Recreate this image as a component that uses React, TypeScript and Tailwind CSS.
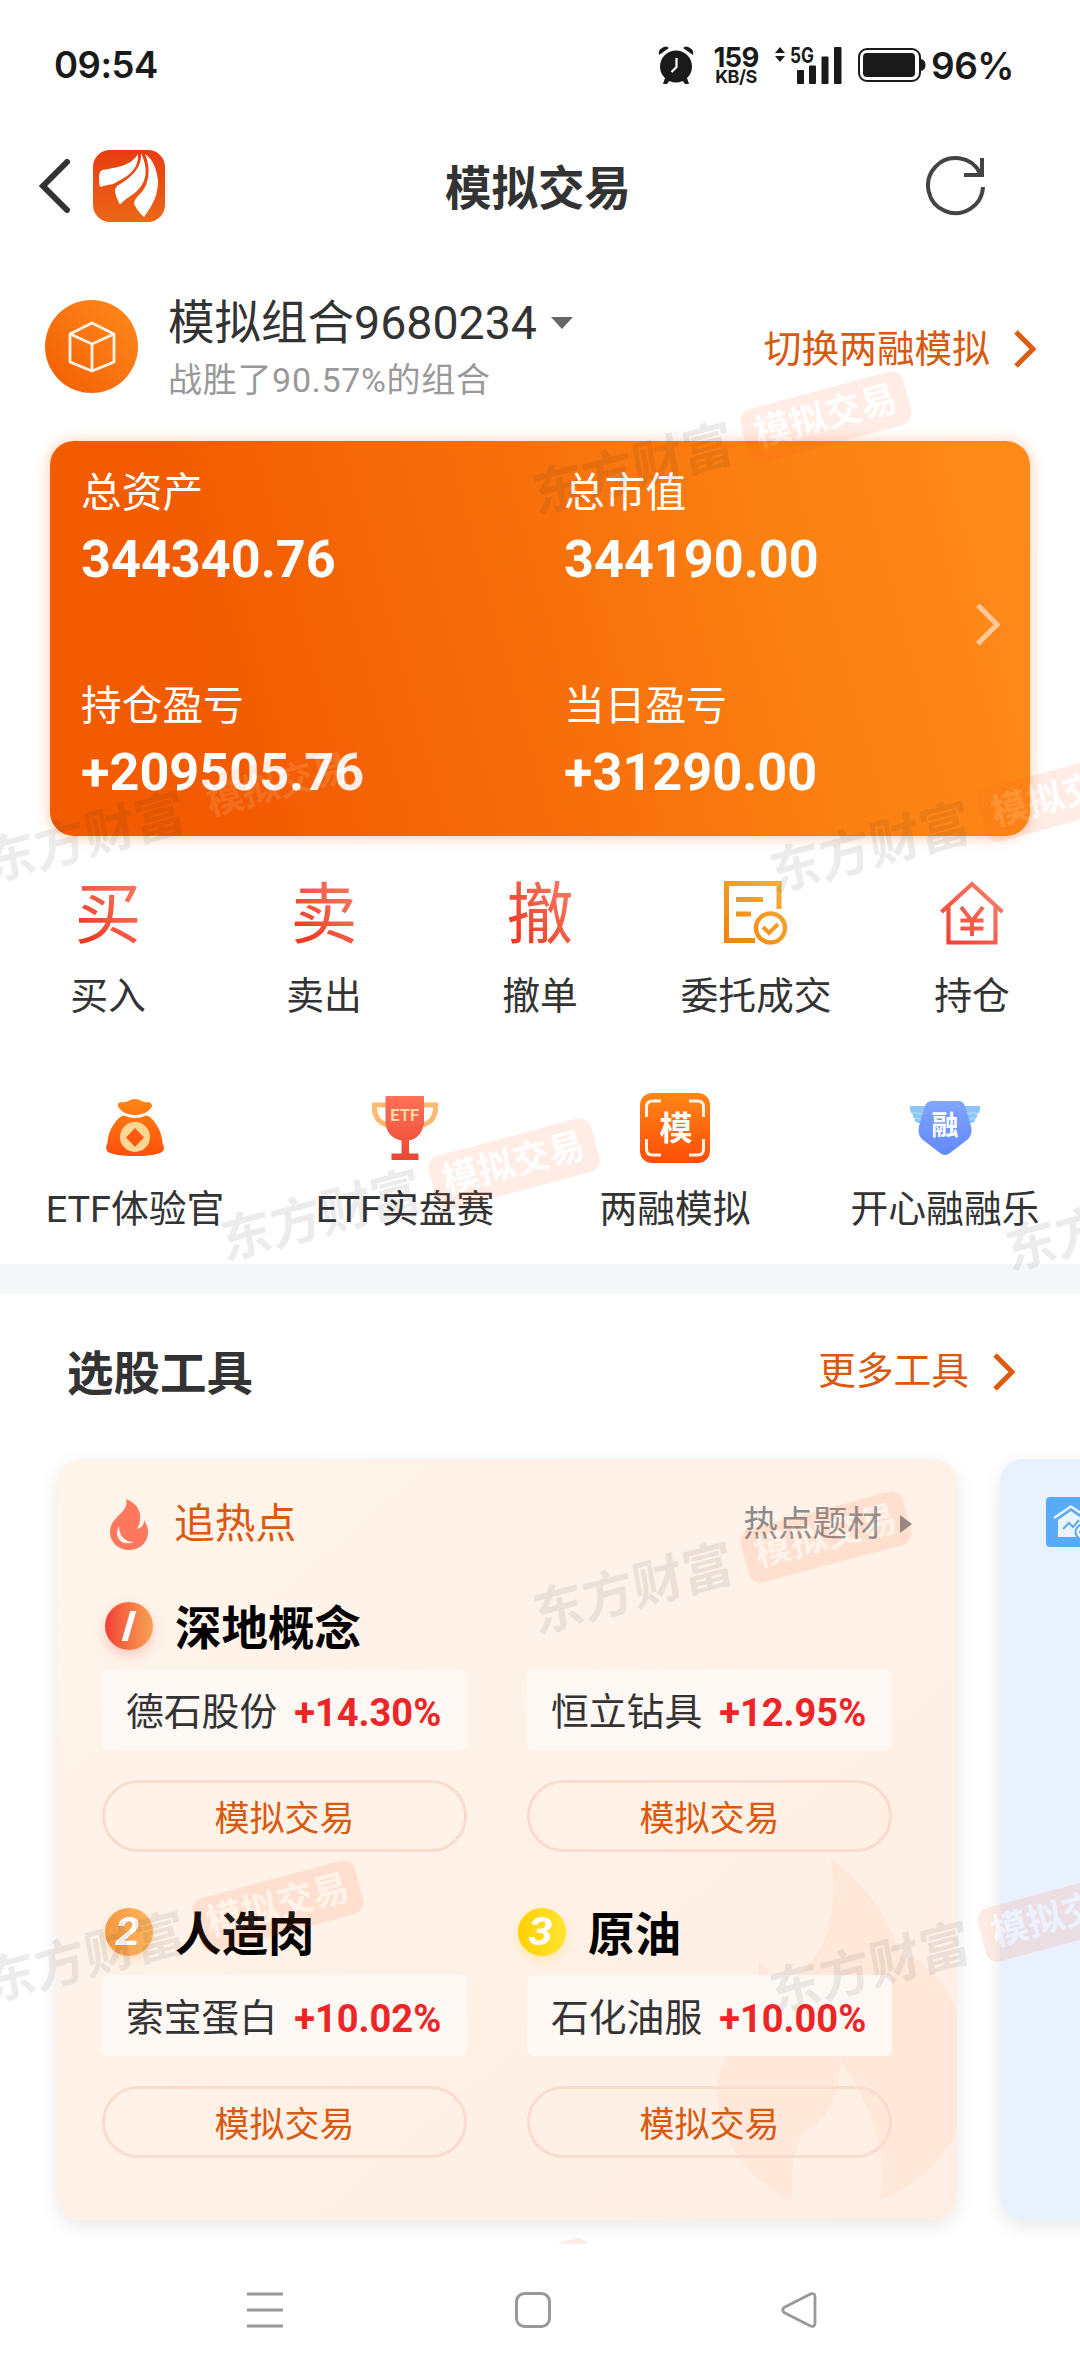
import React from "react";

const watermarks = [
  { x: 826, y: 417 },
  { x: 278, y: 786 },
  { x: 1063, y: 796 },
  { x: 514, y: 1164 },
  { x: 1299, y: 1174 },
  { x: 826, y: 1537 },
  { x: 278, y: 1906 },
  { x: 1063, y: 1916 },
  { x: 512, y: 2284 },
];

const assets = [
  { label: "总资产", value: "344340.76" },
  { label: "总市值", value: "344190.00" },
  { label: "持仓盈亏", value: "+209505.76" },
  { label: "当日盈亏", value: "+31290.00" },
];

function Chevron({ className, width = 5 }: { className: string; width?: number }) {
  return (
    <svg viewBox="0 0 22 38" className={className} fill="none" stroke="currentColor" strokeWidth={width}>
      <path d="M2 2 L19 19 L2 36" />
    </svg>
  );
}

function StatusBar() {
  return (
    <div className="flex h-[130px] items-center pl-[54px] pr-[66px] font-['Inter',sans-serif] font-semibold text-[#1a1a1a]">
      <span className="text-[36.5px] leading-none tracking-[-0.5px]">09:54</span>
      <svg viewBox="0 0 36 38" className="ml-auto h-[38px] w-9" fill="#1a1a1a">
        <circle cx="18" cy="20.5" r="16" />
        <path d="M1 9 Q0 4 4 2 Q8 -1 11 2 Z M35 9 Q36 4 32 2 Q28 -1 25 2 Z" />
        <path d="M7 32 L5 38 H9 L12 34 Z M29 32 L31 38 H27 L24 34 Z" />
        <path d="M18.5 12 V21 L13.5 26" stroke="#fff" strokeWidth="2.2" fill="none" />
      </svg>
      <div className="ml-[17px] flex w-[50px] flex-col items-center pt-px">
        <span className="text-[27.5px] font-bold leading-[21px] tracking-[-0.8px]">159</span>
        <span className="text-[18px] font-bold leading-[17px] tracking-[-0.5px]">KB/S</span>
      </div>
      <svg viewBox="0 0 68 38" className="ml-[14px] h-[38px] w-[68px]" fill="#1a1a1a">
        <path d="M5 1 L10 7 H0 Z M5 16 L10 10 H0 Z" />
        <text x="15" y="16.500" fontSize="21.500" textLength="24" lengthAdjust="spacingAndGlyphs" fontWeight="700">5G</text>
        <rect x="22" y="24" width="7" height="14" rx="1" />
        <rect x="34" y="19.500" width="7" height="18.500" rx="1" />
        <rect x="46.500" y="10.500" width="7" height="27.500" rx="1" />
        <rect x="59" y="1" width="7.500" height="37" rx="1" />
      </svg>
      <svg viewBox="0 0 68 34" className="ml-[15px] h-[34px] w-[68px]">
        <rect x="1" y="1" width="61" height="32" rx="8" fill="none" stroke="#1a1a1a" strokeWidth="2" />
        <rect x="5" y="5" width="52" height="24" rx="4" fill="#1a1a1a" />
        <path d="M63 11 Q67.500 12 67.500 17 Q67.500 22 63 23 Z" fill="#1a1a1a" />
      </svg>
      <span className="ml-[5px] text-[37px] leading-none tracking-[-0.5px]">96%</span>
    </div>
  );
}

function Header() {
  return (
    <header className="flex h-28 items-center pl-[39px] pr-[94px]">
      <svg viewBox="0 0 31 54" className="h-[54px] w-[31px]" fill="none" stroke="#333" strokeWidth="6" strokeLinecap="round">
        <path d="M28 3 L4 27 L28 51" />
      </svg>
      <svg viewBox="0 0 72 72" className="ml-[23px] size-[72px]">
        <defs>
          <linearGradient id="brand" x1="0" y1="0" x2="0" y2="1">
            <stop stopColor="#e83c12" />
            <stop offset="1" stopColor="#ec6717" />
          </linearGradient>
        </defs>
        <rect width="72" height="72" rx="17" fill="url(#brand)" />
        <g fill="#fff">
          <path d="M45 4 C38 15 28 17 9 20 Q6 22 6 27 Q6 33 7 37 Q14 35 20 34 C34 27 46 20 45 4 Z" />
          <path d="M48 3 C49 18 38 28 24 36 Q22 38 22 42 Q24 50 27 54.500 Q31 50 36 47 C53 37 57 22 48 3 Z" />
          <path d="M52 4 C58 18 57 36 45 46 Q41 50 41 54 Q45 62 51 67 C60 55 65 45 65 31 C64 20 60 9 52 4 Z" />
        </g>
      </svg>
      <h1 className="flex-1 pr-[15px] pt-[7px] text-center text-[46.5px] font-bold leading-none text-[#333]">模拟交易</h1>
      <svg viewBox="0 0 60 60" className="size-[60px]" fill="none" stroke="#444" strokeWidth="4">
        <path d="M57 31 A27.500 27.500 0 1 1 54 17" />
        <path d="M56 2 V19 H38" />
      </svg>
    </header>
  );
}

function Account() {
  return (
    <section className="flex h-[199px] items-start pl-[45px] pr-11 pt-[58px]">
      <div className="flex size-[93px] items-center justify-center rounded-full bg-linear-to-tr from-[#f25c00] to-[#ff8a1d]">
        <svg viewBox="0 0 48 52" className="h-[52px] w-12" fill="none" stroke="#fff3e6" strokeWidth="2.800" strokeLinejoin="round">
          <path d="M24 2 L46 13 V41 L24 50 L2 41 V13 Z M2 13 L24 23 L46 13 M24 23 V50" />
        </svg>
      </div>
      <div className="ml-[30px] -mt-[2px]">
        <div className="flex items-center text-[46.5px] leading-[50px] text-[#333]">
          模拟组合9680234
          <svg viewBox="0 0 22 12" className="ml-[14px] h-3 w-[22px]" fill="#666">
            <path d="M0 0 H22 L11 12 Z" />
          </svg>
        </div>
        <div className="mt-3 text-[34px] leading-10 tracking-[0.7px] text-[#999]">战胜了90.57%的组合</div>
      </div>
      <div className="ml-auto mt-[27px] flex items-center text-[37.7px] leading-[44px] text-[#d9590f]">
        切换两融模拟
        <Chevron className="ml-6 h-[38px] w-[22px] text-[#e05a0c]" />
      </div>
    </section>
  );
}

function AssetCard() {
  return (
    <section className="relative mx-[50px] grid h-[395px] grid-cols-[483px_1fr] grid-rows-[213px_1fr] rounded-[24px] bg-[linear-gradient(75deg,#f25b00_18%,#f7700c_52%,#fb8012_74%,#ff8b1b_100%)] pl-[31px] pt-[29px] text-white shadow-[0_1px_14px_rgba(248,110,30,0.4)]">
      {assets.map((item) => (
        <div key={item.label}>
          <div className="text-[40.7px] leading-[46px]">{item.label}</div>
          <div className="mt-[11px] text-[52.2px] font-bold leading-[66px]">{item.value}</div>
        </div>
      ))}
      <Chevron className="absolute right-[29px] top-[162px] h-[43px] w-[26px] text-white/55" width={4.5} />
    </section>
  );
}

function GradientGlyph({ text }: { text: string }) {
  return (
    <span className="bg-linear-to-tr from-[#ef3a22] from-20% to-[#f8715a] to-80% bg-clip-text pt-1 text-[67px] leading-[72px] text-transparent">
      {text}
    </span>
  );
}

function OrderIcon() {
  return (
    <svg viewBox="0 0 64 64" className="size-16" fill="none" stroke="url(#order)" strokeWidth="5">
      <defs>
        <linearGradient id="order" gradientUnits="userSpaceOnUse" x1="0" y1="62" x2="60" y2="0">
          <stop stopColor="#ee8208" />
          <stop offset="1" stopColor="#f7b03c" />
        </linearGradient>
      </defs>
      <path d="M55 28 V2.500 H2.500 V59.500 H31" />
      <path d="M12 18.500 H39 M12 33 H27.010" />
      <circle cx="46.500" cy="47" r="14.500" strokeWidth="4.500" />
      <path d="M39 46 L45 52 L54 43" strokeWidth="4" />
    </svg>
  );
}

function HouseIcon() {
  return (
    <svg viewBox="0 0 64 64" className="size-16" fill="none" stroke="url(#house)" strokeWidth="4.200">
      <defs>
        <linearGradient id="house" gradientUnits="userSpaceOnUse" x1="0" y1="64" x2="60" y2="10">
          <stop stopColor="#ef3a2a" />
          <stop offset="1" stopColor="#f8806c" />
        </linearGradient>
      </defs>
      <path d="M1.500 31 L32 3 L62.500 31" />
      <path d="M8.500 26 V61.500 H55.500 V26" />
      <path d="M21 26 L32 40 L43 26 M32 39 V55 M20.500 39.500 H43.500 M20.500 47.500 H43.500" strokeWidth="4" />
    </svg>
  );
}

function BagIcon() {
  return (
    <svg viewBox="0 0 58 58" className="size-[58px]">
      <defs>
        <linearGradient id="bag" gradientUnits="userSpaceOnUse" x1="0" y1="0" x2="0" y2="58">
          <stop stopColor="#ff8616" />
          <stop offset="1" stopColor="#ff4e0a" />
        </linearGradient>
      </defs>
      <g fill="url(#bag)">
        <path d="M15 3 Q19 4 22 2 Q29 -2 36 2 Q39 4 43 3 Q48 5 45 9 Q40 16 29 16 Q18 16 13 9 Q10 4 15 3 Z" />
        <path d="M18 16.500 Q29 21.500 40 16.500 Q45 17 50 25 Q56 34 56.500 44 Q59 49 57 52 Q52 57 29 57 Q6 57 1 52 Q-1 48 1.500 44 Q2 33 8 25 Q13 17 18 16.500 Z" />
      </g>
      <circle cx="29" cy="38" r="15" fill="#ffd794" />
      <path d="M29 29 L38 38.500 L29 48 L20 38.500 Z" fill="#ff5a0e" />
    </svg>
  );
}

function TrophyIcon() {
  return (
    <svg viewBox="0 0 66 64" className="h-16 w-[66px]">
      <defs>
        <linearGradient id="cup" gradientUnits="userSpaceOnUse" x1="0" y1="0" x2="0" y2="64">
          <stop stopColor="#ff7258" />
          <stop offset="1" stopColor="#ea4633" />
        </linearGradient>
      </defs>
      <path d="M14 9 H2.500 V14 Q4 26 15 29 M52 9 H63.500 V14 Q62 26 51 29" fill="none" stroke="#fdba72" strokeWidth="5" />
      <path d="M13.500 0 H52 V28 Q49 42 37 44.500 V57.500 H46.500 V64 H19.500 V57.500 H29.500 V44.500 Q16 42 13.500 28 Z" fill="url(#cup)" />
      <text x="32.700" y="25" textAnchor="middle" fontSize="16.500" fontWeight="700" fill="#ffd9a0">ETF</text>
    </svg>
  );
}

function MarginIcon() {
  return (
    <svg viewBox="0 0 70 70" className="size-[70px]">
      <defs>
        <linearGradient id="margin" x1="0" y1="0" x2="0" y2="1">
          <stop stopColor="#ff8616" />
          <stop offset="1" stopColor="#ff4d09" />
        </linearGradient>
      </defs>
      <rect width="70" height="70" rx="12" fill="url(#margin)" />
      <path
        d="M6.500 24 V14 Q6.500 8 12.500 8 H21 M49 8 H57.500 Q63.500 8 63.500 14 V24 M63.500 46 V56 Q63.500 62 57.500 62 H49 M21 62 H12.500 Q6.500 62 6.500 56 V46"
        fill="none"
        stroke="#fff1e6"
        strokeWidth="3"
      />
      <text x="36" y="46.500" textAnchor="middle" fontSize="33" fontWeight="700" fill="#fff">模</text>
    </svg>
  );
}

function ShieldIcon() {
  return (
    <svg viewBox="0 0 70 54" className="h-[54px] w-[70px]">
      <defs>
        <linearGradient id="shield" x1="0" y1="0" x2="0" y2="1">
          <stop stopColor="#82a4fb" />
          <stop offset="1" stopColor="#618af9" />
        </linearGradient>
      </defs>
      <g fill="#8cc6fb">
        <path d="M0 5 H18 V22 H8 Q4 21 5 18 Q2 16 3 13 Q-1 11 0 5 Z" />
        <path d="M70 5 H52 V22 H62 Q66 21 65 18 Q68 16 67 13 Q71 11 70 5 Z" />
      </g>
      <path d="M3 11.500 L13 13 M5 17 L13 18.500 M67 11.500 L57 13 M65 17 L57 18.500" stroke="#c4e1fd" strokeWidth="0.800" />
      <path d="M22 0 H48 Q53 0 55 5 L61 25 Q63 34 57 39 L40 52 Q35 56 30 52 L13 39 Q7 34 9 25 L15 5 Q17 0 22 0 Z" fill="url(#shield)" />
      <text x="35" y="33.500" textAnchor="middle" fontSize="27" fontWeight="700" fill="#fff">融</text>
    </svg>
  );
}

const actions = [
  { name: "买入", icon: <GradientGlyph text="买" /> },
  { name: "卖出", icon: <GradientGlyph text="卖" /> },
  { name: "撤单", icon: <GradientGlyph text="撤" /> },
  { name: "委托成交", icon: <OrderIcon /> },
  { name: "持仓", icon: <HouseIcon /> },
];

const activities = [
  { name: "ETF体验官", icon: <BagIcon /> },
  { name: "ETF实盘赛", icon: <TrophyIcon /> },
  { name: "两融模拟", icon: <MarginIcon /> },
  { name: "开心融融乐", icon: <ShieldIcon /> },
];

function Actions() {
  return (
    <section className="h-[428px] pt-[41px] text-[37.8px] leading-[44px] text-[#333]">
      <div className="grid grid-cols-5">
        {actions.map((item) => (
          <div key={item.name} className="flex flex-col items-center">
            <div className="flex h-[72px] items-center">{item.icon}</div>
            <span className="mt-[25px]">{item.name}</span>
          </div>
        ))}
      </div>
      <div className="mt-[75px] grid grid-cols-4">
        {activities.map((item) => (
          <div key={item.name} className="flex flex-col items-center whitespace-nowrap">
            <div className="flex h-[70px] items-center">{item.icon}</div>
            <span className="mt-[24px]">{item.name}</span>
          </div>
        ))}
      </div>
    </section>
  );
}

function Stock({ name, change }: { name: string; change: string }) {
  return (
    <div className="w-[365px]">
      <div className="flex h-[81px] items-center rounded-md bg-[#fef8f4] pl-6 pt-[6px]">
        <span className="text-[37.8px] leading-none text-[#333]">{name}</span>
        <span className="ml-[17px] text-[38px] font-bold leading-none text-[#ec2626]">{change}</span>
      </div>
      <div className="mt-[30px] flex h-[72px] items-center justify-center rounded-full border-[3px] border-[#f9dccd] pt-[6px] text-[35px] leading-none text-[#d9590f]">
        模拟交易
      </div>
    </div>
  );
}

function Rank({ n }: { n: number }) {
  const styles = [
    "bg-linear-to-r from-[#f03a36] to-[#f6a254] shadow-[0_5px_12px_rgba(240,70,50,0.25)]",
    "bg-linear-to-r from-[#f6993f] to-[#fbb55f] shadow-[0_4px_10px_rgba(246,160,70,0.25)]",
    "bg-linear-to-r from-[#ffd000] to-[#ffe42c] shadow-[0_4px_10px_rgba(255,215,0,0.3)]",
  ];
  return (
    <span className={`flex size-12 items-center justify-center rounded-full text-[38px] font-bold italic leading-none text-white ${styles[n - 1]}`}>
      {n === 1 ? <i className="h-[30px] w-[6px] -skew-x-[16deg] bg-white" /> : <span className="scale-x-115 pr-[3px]">{n}</span>}
    </span>
  );
}

function Topic({ n, name }: { n: number; name: string }) {
  return (
    <div className="flex w-[413px] items-center">
      <Rank n={n} />
      <span className="ml-[22px] pt-[5px] text-[46.5px] font-bold leading-[54px] text-black">{name}</span>
    </div>
  );
}

function ToolCard() {
  return (
    <div className="relative h-[761px] w-[900px] shrink-0 overflow-hidden rounded-[24px] bg-linear-to-br from-[#fff5eb] to-[#ffeee3]">
      <svg viewBox="0 0 240 341" className="absolute bottom-[20px] right-0 h-[341px] w-[240px]" fill="#ffe2d2" fillOpacity="0.6">
        <path d="M114 0 C145 22 165 50 178 81 C192 110 188 105 195 96 C215 110 232 130 240 152 V271 C225 305 195 328 162 341 C175 300 150 235 123 202 C123 245 108 260 86 274 C76 290 74 310 75 341 C35 325 0 280 0 233 C0 190 40 165 42 102 C50 108 56 118 58 130 C80 120 103 100 110 73 C117 50 117 25 114 0 Z" />
      </svg>
      <div className="relative pl-[45px]">
        <div className="flex h-[130px] items-center pl-2 pr-[45px]">
          <svg viewBox="0 0 38 51" className="h-[51px] w-[38px]">
            <path d="M16 0 C26 4 31 11 30 20 C30 25 28 28 27 30 C32 29 34 26 34 21 C37 26 38 29 38 33 C38 44 29 51 19 51 C8 51 0 43 0 33 C0 17 20 14 16 0 Z" fill="#ff775c" />
            <path d="M9 27 C3 38 12 48 24 43 C15 43 9 37 9 27 Z" fill="#fff1e8" />
          </svg>
          <span className="ml-[26px] text-[40.7px] leading-none text-[#d9590f]">追热点</span>
          <span className="ml-auto text-[34.7px] leading-none text-[#8c8c8c]">热点题材</span>
          <svg viewBox="0 0 12 18" className="ml-[18px] h-[18px] w-3" fill="#8c8c8c">
            <path d="M0 0 L12 9 L0 18 Z" />
          </svg>
        </div>
        <div className="mt-[10px] flex h-[54px] items-center pl-[3px]">
          <Topic n={1} name="深地概念" />
        </div>
        <div className="mt-[16px] flex gap-[60px]">
          <Stock name="德石股份" change="+14.30%" />
          <Stock name="恒立钻具" change="+12.95%" />
        </div>
        <div className="mt-[53px] flex h-[54px] items-center pl-[3px]">
          <Topic n={2} name="人造肉" />
          <Topic n={3} name="原油" />
        </div>
        <div className="mt-[16px] flex gap-[60px]">
          <Stock name="索宝蛋白" change="+10.02%" />
          <Stock name="石化油服" change="+10.00%" />
        </div>
      </div>
    </div>
  );
}

function Tools() {
  return (
    <section>
      <div className="flex h-[165px] items-center pb-[10px] pl-[67px] pr-[65px]">
        <h2 className="pt-[5px] text-[46.5px] font-bold leading-none text-[#333]">选股工具</h2>
        <div className="ml-auto flex items-center text-[37.7px] leading-none text-[#d9590f]">
          更多工具
          <Chevron className="ml-6 h-[38px] w-[22px] text-[#e05a0c]" />
        </div>
      </div>
      <div className="flex gap-[43px] pl-[57px]">
        <div className="rounded-[24px] shadow-[0_6px_20px_rgba(0,0,0,0.09)]">
          <ToolCard />
        </div>
        <div className="h-[761px] w-[900px] shrink-0 rounded-[24px] bg-[#e9f1fe] pl-[46px] pt-[38px] shadow-[0_6px_20px_rgba(0,0,0,0.09)]">
          <svg viewBox="0 0 50 50" className="size-[50px]">
            <rect width="50" height="50" rx="4" fill="#58abf8" />
            <path d="M8 21 L25 9.500 L42 21" fill="none" stroke="#e9f4ff" strokeWidth="2.500" />
            <path d="M12 23 L25 14 L38 23 V40 H12 Z" fill="#e9f4ff" />
            <path d="M17 32 L23 26 L27 30 L33 23" fill="none" stroke="#58abf8" strokeWidth="2" />
            <circle cx="37" cy="35" r="7.500" fill="#e9f4ff" stroke="#58abf8" strokeWidth="2" />
            <path d="M33 35 H41" stroke="#58abf8" strokeWidth="2" />
          </svg>
        </div>
      </div>
    </section>
  );
}

function Watermark({ x, y }: { x: number; y: number }) {
  return (
    <div className="absolute" style={{ left: x, top: y }}>
      <div className="absolute left-[-193px] top-[53px] flex h-[52px] w-[210px] -translate-x-1/2 -translate-y-1/2 -rotate-[15deg] -skew-x-[5deg] items-center justify-center whitespace-nowrap text-[51.5px] font-bold text-[#222] opacity-[0.08]">
        东方财富
      </div>
      <div className="absolute flex h-[55px] w-[168px] -translate-x-1/2 -translate-y-1/2 -rotate-[15deg] items-center justify-center whitespace-nowrap rounded-xl bg-[#ff5a1a] text-[36.5px] font-bold text-white opacity-[0.11]">
        模拟交易
      </div>
    </div>
  );
}

function NavBar() {
  return (
    <nav className="flex h-[132px] items-center bg-white pl-[247px]">
      <svg viewBox="0 0 36 36" className="size-9" stroke="#999" strokeWidth="3">
        <path d="M0 2 H36 M0 18 H36 M0 34 H36" />
      </svg>
      <svg viewBox="0 0 36 36" className="ml-[232px] size-9" fill="none" stroke="#999" strokeWidth="3">
        <rect x="1.500" y="1.500" width="33" height="33" rx="8" />
      </svg>
      <svg viewBox="0 0 36 36" className="ml-[230px] size-9" fill="none" stroke="#999" strokeWidth="2.800" strokeLinejoin="round">
        <path d="M30 1.800 L3 15.500 Q0.500 18 3 20.500 L30 34.200 Q34 35 34 31 V5 Q34 1 30 1.800 Z" />
      </svg>
    </nav>
  );
}

export default function App() {
  return (
    <div className="w-[1080px] bg-white font-['Roboto','Noto_Sans_CJK_SC',sans-serif]">
      <main className="relative h-[2244px] overflow-hidden">
        <StatusBar />
        <Header />
        <Account />
        <AssetCard />
        <Actions />
        <div className="h-[30px] bg-[#f6f7f9]" />
        <Tools />
        <div className="pointer-events-none absolute inset-0">
          {watermarks.map((mark) => (
            <Watermark key={`${mark.x}-${mark.y}`} {...mark} />
          ))}
        </div>
      </main>
      <NavBar />
    </div>
  );
}
